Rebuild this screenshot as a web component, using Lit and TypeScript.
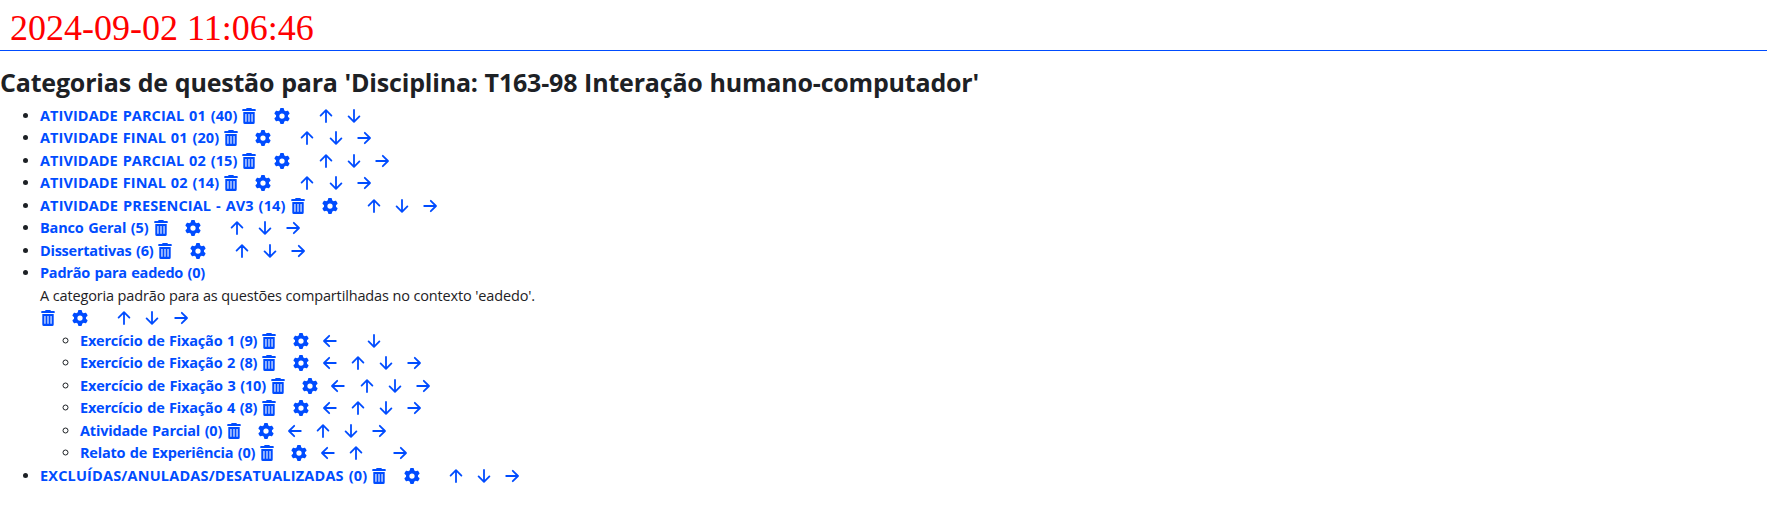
import { LitElement, html, css, svg, nothing } from "lit";
import { customElement, property } from "lit/decorators.js";

interface Category {
  name: string;
  width: number;
  moves: string; // l, u, d, r; "-" leaves an empty slot
  info?: string;
  children?: Category[];
}

const CATEGORIES: Category[] = [
  { name: "ATIVIDADE PARCIAL 01 (40)", width: 197.4, moves: "-ud" },
  { name: "ATIVIDADE FINAL 01 (20)", width: 179.2, moves: "-udr" },
  { name: "ATIVIDADE PARCIAL 02 (15)", width: 197.4, moves: "-udr" },
  { name: "ATIVIDADE FINAL 02 (14)", width: 179.2, moves: "-udr" },
  { name: "ATIVIDADE PRESENCIAL - AV3 (14)", width: 245.5, moves: "-udr" },
  { name: "Banco Geral (5)", width: 108.4, moves: "-udr" },
  { name: "Dissertativas (6)", width: 113.4, moves: "-udr" },
  {
    name: "Padrão para eadedo (0)",
    width: 165,
    moves: "-udr",
    info: "A categoria padrão para as questões compartilhadas no contexto 'eadedo'.",
    children: [
      { name: "Exercício de Fixação 1 (9)", width: 177.2, moves: "l-d" },
      { name: "Exercício de Fixação 2 (8)", width: 177.2, moves: "ludr" },
      { name: "Exercício de Fixação 3 (10)", width: 185.9, moves: "ludr" },
      { name: "Exercício de Fixação 4 (8)", width: 177.2, moves: "ludr" },
      { name: "Atividade Parcial (0)", width: 142.2, moves: "ludr" },
      { name: "Relato de Experiência (0)", width: 175.2, moves: "lu-r" },
    ],
  },
  { name: "EXCLUÍDAS/ANULADAS/DESATUALIZADAS (0)", width: 327.4, moves: "-udr" },
];

const TRASH =
  "M5.7 0H10.3L11 1H14.2Q14.7 1 14.7 1.5V2.9H1.3V1.5Q1.3 1 1.8 1H5ZM2.3 4H13.7V14.4Q13.7 15.9 12.2 15.9H3.8Q2.3 15.9 2.3 14.4ZM4.4 6V13.8H5.5V6ZM7.45 6V13.8H8.55V6ZM10.5 6V13.8H11.6V6Z";
const GEAR =
  "M495.9 166.6c3.2 8.7 .5 18.4-6.4 24.6l-43.3 39.4c1.1 8.3 1.7 16.8 1.7 25.4s-.6 17.1-1.7 25.4l43.3 39.4c6.9 6.2 9.6 15.9 6.4 24.6c-4.4 11.9-9.7 23.3-15.8 34.3l-4.7 8.1c-6.6 11-14 21.4-22.1 31.2c-5.9 7.2-15.7 9.6-24.5 6.8l-55.7-17.7c-13.4 10.3-28.2 18.9-44 25.4l-12.5 57.1c-2 9.1-9 16.3-18.2 17.8c-13.8 2.3-28 3.5-42.5 3.5s-28.7-1.2-42.5-3.5c-9.2-1.5-16.2-8.7-18.2-17.8l-12.5-57.1c-15.8-6.5-30.6-15.1-44-25.4L83.1 425.9c-8.8 2.8-18.6 .3-24.5-6.8c-8.1-9.8-15.5-20.2-22.1-31.2l-4.7-8.1c-6.1-11-11.4-22.4-15.8-34.3c-3.2-8.7-.5-18.4 6.4-24.6l43.3-39.4C64.6 273.1 64 264.6 64 256s.6-17.1 1.7-25.4L22.4 191.2c-6.9-6.2-9.6-15.9-6.4-24.6c4.4-11.9 9.7-23.3 15.8-34.3l4.7-8.1c6.6-11 14-21.4 22.1-31.2c5.9-7.2 15.7-9.6 24.5-6.8l55.7 17.7c13.4-10.3 28.2-18.9 44-25.4l12.5-57.1c2-9.1 9-16.3 18.2-17.8C227.3 1.2 241.5 0 256 0s28.7 1.2 42.5 3.5c9.2 1.5 16.2 8.7 18.2 17.8l12.5 57.1c15.8 6.5 30.6 15.1 44 25.4l55.7-17.7c8.8-2.8 18.6-.3 24.5 6.8c8.1 9.8 15.5 20.2 22.1 31.2l4.7 8.1c6.1 11 11.4 22.4 15.8 34.3zM256 340a84 84 0 1 0 0-168 84 84 0 1 0 0 168z";
const ARROWS: Record<string, string> = {
  u: "M8 14V2.4M2.6 7.6L8 2.2L13.4 7.6",
  d: "M8 2V13.6M2.6 8.4L8 13.8L13.4 8.4",
  r: "M2.2 8H13.8M8.8 2.8L14 8L8.8 13.2",
  l: "M13.8 8H2.2M7.2 2.8L2 8L7.2 13.2",
};

/** Text set to a fixed advance width by spreading the difference over its letters. */
@customElement("fitted-text")
class FittedText extends LitElement {
  static styles = css`
    :host { display: inline-block; white-space: pre; }
  `;
  @property() text = "";
  @property({ type: Number }) width = 0;

  render() {
    return html`<span>${this.text}</span>`;
  }
  updated() {
    const span = this.renderRoot.querySelector("span")!;
    span.style.letterSpacing = "0px";
    const natural = span.getBoundingClientRect().width;
    span.style.letterSpacing = `${(this.width - natural) / this.text.length}px`;
  }
}

@customElement("app-root")
class AppRoot extends LitElement {
  static styles = css`
    :host {
      display: block;
      min-height: 520px;
      background: #fff;
      color: #1d2125;
      font: 400 14.5px/22.5px "Open Sans", "Noto Sans", sans-serif;
    }
    .stamp {
      box-sizing: border-box;
      height: 51px;
      padding: 8px 0 0 10px;
      border-bottom: 1px solid #004cff;
      color: #f00;
      font: 36px/41px "Liberation Serif", serif;
    }
    h2 {
      margin: 15px 0 6.7px;
      font-size: 25px;
      font-weight: 700;
      line-height: 32px;
      word-spacing: 0.5px;
    }
    ul { margin: 0; padding: 0 0 0 40px; list-style: disc; }
    ul ul { list-style: circle; }
    .row { display: flex; height: 22.5px; }
    .name { color: #004cff; font-weight: 700; margin-right: 4.1px; text-decoration: none; word-spacing: 1px; }
    .icons { display: flex; align-items: center; height: 22px; color: #004cff; }
    .icon { display: block; width: 16px; height: 16px; margin-right: 12.2px; position: relative; top: -0.2px; }
    .trash { margin-right: 16.2px; }
    .slot { width: 15.8px; }
    .info { height: 22.5px; }
  `;

  icon(kind: string) {
    if (kind === "-") return html`<span class="slot"></span>`;
    if (kind === "trash")
      return svg`<svg class="icon trash" viewBox="0 0 16 16"><path fill="currentColor" fill-rule="evenodd" d=${TRASH} /></svg>`;
    if (kind === "gear")
      return svg`<svg class="icon" viewBox="0 0 512 512"><path fill="currentColor" fill-rule="evenodd" d=${GEAR} /></svg>`;
    return svg`<svg class="icon" viewBox="0 0 16 16"><path fill="none" stroke="currentColor" stroke-width="1.8" stroke-linecap="round" stroke-linejoin="round" d=${ARROWS[kind]} /></svg>`;
  }

  item(c: Category): unknown {
    const name = html`<a class="name"><fitted-text .text=${c.name} .width=${c.width}></fitted-text></a>`;
    const icons = html`<span class="icons">${["trash", "gear", ...c.moves].map((k) => this.icon(k))}</span>`;
    return html`<li>
      ${c.info
        ? html`<div class="row">${name}</div>
            <div class="info"><fitted-text .text=${c.info} .width=${495}></fitted-text></div>
            <div class="row">${icons}</div>`
        : html`<div class="row">${name}${icons}</div>`}
      ${c.children ? html`<ul>${c.children.map((k) => this.item(k))}</ul>` : nothing}
    </li>`;
  }

  render() {
    return html`
      <div class="stamp">2024-09-02 11:06:46</div>
      <h2><fitted-text .text=${"Categorias de questão para 'Disciplina: T163-98 Interação humano-computador'"} .width=${979}></fitted-text></h2>
      <ul>${CATEGORIES.map((c) => this.item(c))}</ul>
    `;
  }
}
